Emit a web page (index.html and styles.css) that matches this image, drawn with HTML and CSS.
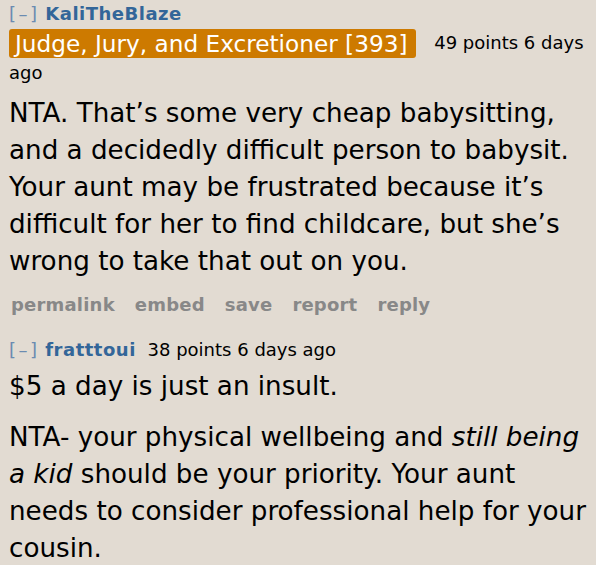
FILE: index.html
```html
<!DOCTYPE html>
<html>
<head>
<meta charset="utf-8">
<link rel="stylesheet" href="styles.css">
</head>
<body>
<div class="comment">
  <p class="tagline tagline-wrapped">
    <a class="expand">[–]</a> <a class="author">KaliTheBlaze</a>
    <span class="flair">Judge, Jury, and Excretioner [393]</span>
    <span class="score">49 points</span> <span class="time">6 days ago</span>
  </p>
  <div class="md">
    <p>NTA. That’s some very cheap babysitting, and a decidedly difficult person to babysit. Your aunt may be frustrated because it’s difficult for her to find childcare, but she’s wrong to take that out on you.</p>
  </div>
  <ul class="buttons">
    <li>permalink</li>
    <li>embed</li>
    <li>save</li>
    <li>report</li>
    <li>reply</li>
  </ul>
</div>
<div class="comment">
  <p class="tagline">
    <a class="expand">[–]</a> <a class="author">fratttoui</a>
    <span class="score">38 points</span> <span class="time">6 days ago</span>
  </p>
  <div class="md">
    <p>$5 a day is just an insult.</p>
    <p>NTA- your physical wellbeing and <em>still being a kid</em> should be your priority. Your aunt needs to consider professional help for your cousin.</p>
  </div>
</div>
</body>
</html>
```
FILE: styles.css
```css
html, body {
  margin: 0;
  padding: 0;
  background: #e2dbd2;
}
body {
  font-family: "DejaVu Sans", Verdana, sans-serif;
  color: #000;
  padding: 0 4px 0 9px;
}
.tagline {
  margin: 0;
  font-size: 18px;
  line-height: 28px;
  color: #000;
}
.tagline-wrapped {
  margin-bottom: 8px;
}
.expand {
  color: #6b8bb1;
  font-weight: normal;
  letter-spacing: 2.5px;
}
.author {
  color: #336699;
  font-weight: bold;
  letter-spacing: 0.5px;
  margin-right: 6px;
}
.flair {
  display: inline-block;
  vertical-align: middle;
  background: #cd7a00;
  color: #fff;
  font-size: 23.2px;
  line-height: 29px;
  padding: 0 9px 0 6px;
  border-radius: 3px;
  margin: 1px 12px 1px 0;
}
.md {
  margin-top: 4px;
  font-size: 26.2px;
  line-height: 37px;
}
.md p {
  margin: 0 0 14px;
}
.md p:last-child {
  margin-bottom: 0;
}
.md em {
  font-style: italic;
}
.buttons {
  list-style: none;
  margin: 11px 0 0;
  padding: 0 0 0 2px;
  display: flex;
  gap: 20px;
  font-size: 18px;
  font-weight: bold;
  letter-spacing: 0.2px;
  color: #888;
  line-height: 28px;
}
.comment + .comment {
  margin-top: 17px;
}
```
